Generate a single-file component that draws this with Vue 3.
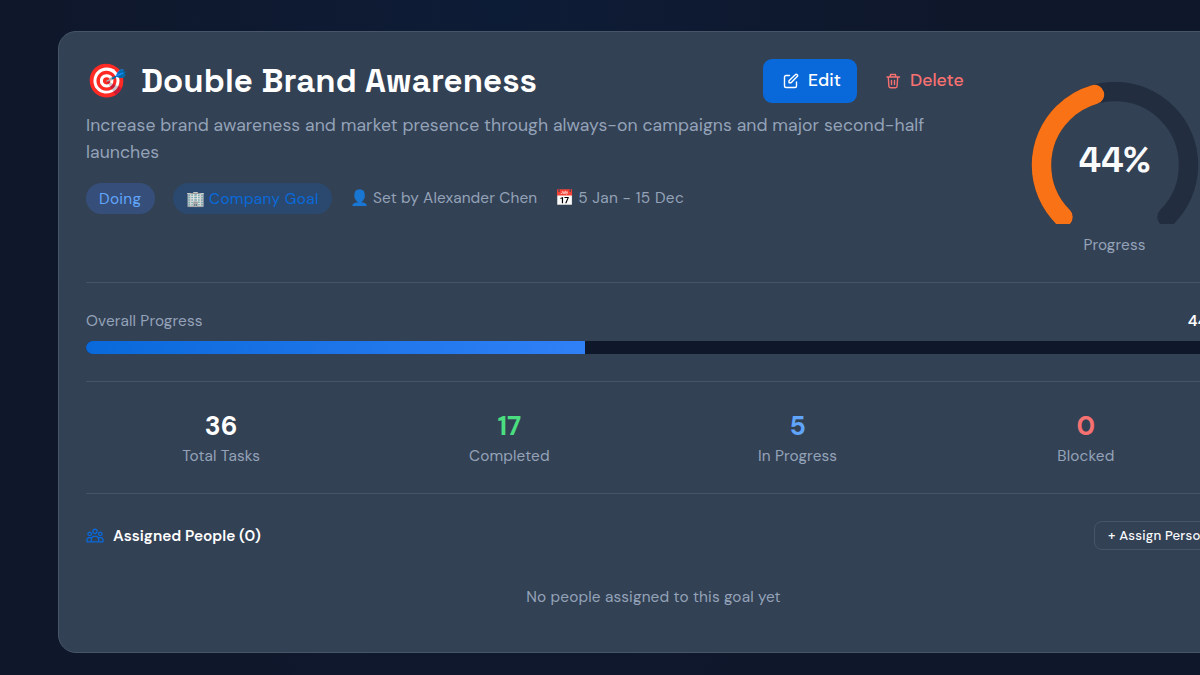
<script setup>
import { computed, ref } from 'vue'

const goal = ref({
  title: 'Double Brand Awareness',
  description:
    'Increase brand awareness and market presence through always-on campaigns and major second-half launches',
  status: 'Doing',
  owner: 'Alexander Chen',
  period: '5 Jan - 15 Dec',
  progress: 44
})

const stats = [
  { label: 'Total Tasks', value: 36, tone: 'total' },
  { label: 'Completed', value: 17, tone: 'done' },
  { label: 'In Progress', value: 5, tone: 'doing' },
  { label: 'Blocked', value: 0, tone: 'blocked' }
]

const people = ref([])

// 270 degree gauge, starting bottom left
const gaugeFill = computed(() => `${goal.value.progress} 100`)
</script>

<template>
  <div class="page">
    <section class="goal-card">
      <header class="goal-header">
        <div class="goal-main">
          <div class="title-row">
            <h1><span class="target">🎯</span><span>{{ goal.title }}</span></h1>
            <div class="actions">
              <button class="btn edit">
                <svg viewBox="0 0 16 16">
                  <path d="M6.5 2.5H3A1.5 1.5 0 0 0 1.5 4v9A1.5 1.5 0 0 0 3 14.5h9a1.5 1.5 0 0 0 1.5-1.5V9" />
                  <path d="M12.3 1.7a1.3 1.3 0 0 1 1.9 1.9L8.1 9.8H6V7.7z" />
                </svg>
                <span>Edit</span>
              </button>
              <button class="btn delete">
                <svg viewBox="0 0 16 16">
                  <path d="M2 4h12.5M3.300 4l.6 9.300a1.500 1.500 0 0 0 1.500 1.400h5.200a1.500 1.500 0 0 0 1.500-1.400L12.700 4M5 4l.6-2.500h4.800L11 4M6.500 7.500v4M9.500 7.500v4" />
                </svg>
                <span>Delete</span>
              </button>
            </div>
          </div>
          <p class="description">{{ goal.description }}</p>
          <div class="meta">
            <span class="chip status">{{ goal.status }}</span>
            <span class="chip company"><i>🏢</i><span>Company Goal</span></span>
            <span class="info"><i>👤</i><span>Set by {{ goal.owner }}</span></span>
            <span class="info"><i>📅</i><span class="period">{{ goal.period }}</span></span>
          </div>
        </div>
        <div class="gauge">
          <div class="gauge-chart">
            <svg viewBox="0 0 168 142">
              <path class="track" d="M32 135A73.5 73.5 0 1 1 136 135" />
              <path
                class="fill"
                d="M32 135A73.5 73.5 0 1 1 136 135"
                pathLength="100"
                :stroke-dasharray="gaugeFill"
              />
            </svg>
            <strong>{{ goal.progress }}%</strong>
          </div>
          <span class="gauge-label">Progress</span>
        </div>
      </header>

      <div class="overall">
        <div class="overall-head">
          <span>Overall Progress</span>
          <b>{{ goal.progress }}%</b>
        </div>
        <div class="bar">
          <div class="bar-fill" :style="{ width: goal.progress + '%' }"></div>
        </div>
      </div>

      <div class="stats">
        <div v-for="s in stats" :key="s.label" class="stat">
          <strong :class="s.tone">{{ s.value }}</strong>
          <span>{{ s.label }}</span>
        </div>
      </div>

      <div class="people">
        <div class="people-head">
          <svg viewBox="0 0 18 15">
            <path d="M9 1.200l2 1v2.300l-2 1.300-2-1.300V2.200zM3.700 4.200l1.700.8v1.700l-1.700 1L2 6.700V5zM14.300 4.200L16 5v1.700l-1.700 1-1.700-1V5z" />
            <path d="M5.300 13.800v-3.300L7 8.300h4l1.700 2.200v3.300zM5.300 13.800H1v-2.500l1.500-1.600h2.800M12.700 13.800H17v-2.500l-1.500-1.600h-2.800" />
          </svg>
          <h2>Assigned People ({{ people.length }})</h2>
          <button class="assign">+ Assign Person</button>
        </div>
        <p class="empty">No people assigned to this goal yet</p>
      </div>
    </section>
  </div>
</template>

<style>
body {
  overflow: hidden;
  background: #0f172a;
}
</style>

<style scoped>
* {
  box-sizing: border-box;
}
.page {
  overflow: hidden;
  height: 675px;
  padding: 31px 0 0 58px;
  font-family: 'DM Sans', Inter, sans-serif;
  font-optical-sizing: none;
  color: #94a3b8;
  background: radial-gradient(ellipse 480px 850px at 500px 0, #0d1c36, #0f172a);
}
.goal-card {
  width: 1191px;
  height: 622px;
  padding: 27px;
  border: 1px solid #475569;
  border-radius: 18px;
  background: #334155;
}
.goal-header {
  display: flex;
  justify-content: space-between;
  height: 224px;
  border-bottom: 1px solid #475569;
}
.goal-main {
  width: 896px;
}
.title-row {
  display: flex;
  justify-content: space-between;
  align-items: center;
  height: 44px;
}
h1 {
  display: flex;
  align-items: center;
  gap: 13px;
  margin: 0;
  color: #fff;
  font-family: 'Space Grotesk', 'DM Sans', Inter, sans-serif;
  font-size: 33px;
  line-height: 44px;
  font-weight: 700;
  letter-spacing: 0.09px;
  white-space: nowrap;
}
.target {
  width: 42px;
}
.actions {
  display: flex;
  gap: 11px;
}
.btn {
  display: flex;
  align-items: center;
  gap: 9px;
  height: 44px;
  padding: 0 18px 2px;
  border: 0;
  border-radius: 9px;
  background: transparent;
  font-family: inherit;
  font-size: 17.6px;
  font-weight: 500;
}
.btn svg {
  flex: none;
  width: 16px;
  height: 16px;
  margin-top: 1px;
  fill: none;
  stroke: currentColor;
  stroke-width: 1.4;
  stroke-linejoin: round;
  stroke-linecap: round;
}
.edit {
  width: 94px;
  padding-left: 20px;
  padding-right: 16px;
  background: #0969da;
  color: #fff;
}
.delete {
  width: 114px;
  padding-left: 17px;
  color: #f87171;
}
.description {
  margin: 9px 0 0;
  max-width: 860px;
  font-size: 17.6px;
  line-height: 26.5px;
  letter-spacing: 0.075px;
}
.meta {
  display: flex;
  align-items: center;
  gap: 18px;
  margin-top: 17px;
  font-size: 15.4px;
  line-height: 32px;
  letter-spacing: 0.12px;
  white-space: nowrap;
}
.meta i {
  display: inline-block;
  width: 23px;
  font-style: normal;
}
.chip {
  height: 31px;
  padding: 0 13px;
  border-radius: 16px;
}
.status {
  width: 69px;
  background: #364f7a;
  color: #60a5fa;
  letter-spacing: 0.3px;
}
.company {
  width: 159px;
  background: #2b496f;
  color: #0969da;
  letter-spacing: 0.34px;
}
.period {
  letter-spacing: 0.32px;
}
.gauge {
  display: flex;
  flex-direction: column;
  align-items: center;
  width: 213px;
  padding-top: 23px;
}
.gauge-chart {
  display: grid;
  height: 143px;
}
.gauge-chart > * {
  grid-area: 1 / 1;
}
.gauge svg {
  width: 168px;
  height: 142px;
  fill: none;
  stroke-width: 19.5;
  stroke-linecap: round;
}
.track {
  stroke: #222d40;
}
.fill {
  stroke: #f97316;
}
.gauge strong {
  align-self: center;
  justify-self: center;
  margin-top: 11px;
  color: #f8fafc;
  font-family: 'Space Grotesk', 'DM Sans', Inter, sans-serif;
  font-size: 35.2px;
}
.gauge-label {
  margin-top: 10px;
  font-size: 15.4px;
  line-height: 20px;
  letter-spacing: 0.1px;
}
.overall {
  height: 99px;
  padding-top: 26px;
  border-bottom: 1px solid #475569;
}
.overall-head {
  display: flex;
  justify-content: space-between;
  height: 32px;
  font-size: 15.4px;
  line-height: 25px;
  letter-spacing: 0.12px;
}
.overall-head b {
  color: #fff;
  font-weight: 600;
  letter-spacing: 0.2px;
}
.bar {
  overflow: hidden;
  height: 13px;
  border-radius: 7px;
  background: #0f172a;
}
.bar-fill {
  height: 100%;
  background: linear-gradient(90deg, #0969da, #3080f7);
}
.stats {
  display: grid;
  grid-template-columns: repeat(4, 1fr);
  gap: 18px;
  height: 112px;
  padding-top: 26px;
  border-bottom: 1px solid #475569;
}
.stat {
  display: flex;
  flex-direction: column;
  align-items: center;
}
.stat strong {
  font-size: 26.4px;
  line-height: 36px;
}
.stat span {
  margin-top: 1px;
  font-size: 15.4px;
  line-height: 22px;
  letter-spacing: 0.12px;
}
.total {
  color: #fff;
}
.done {
  color: #4ade80;
}
.doing {
  color: #60a5fa;
}
.blocked {
  color: #f87171;
}
.people {
  padding-top: 27px;
}
.people-head {
  display: flex;
  align-items: center;
  height: 29px;
}
.people-head svg {
  width: 18px;
  height: 15px;
  fill: none;
  stroke: #0969da;
  stroke-width: 1.3;
  stroke-linejoin: round;
}
h2 {
  flex: 1;
  margin: 0 0 0 9px;
  color: #fff;
  font-size: 15.4px;
  font-weight: 600;
}
.assign {
  width: 127px;
  height: 29px;
  padding: 0 0 0 13px;
  border: 1px solid #475569;
  border-radius: 8px;
  background: transparent;
  color: #f8fafc;
  font-family: inherit;
  font-size: 13.2px;
  font-weight: 500;
  letter-spacing: 0.2px;
  text-align: left;
  white-space: nowrap;
}
.empty {
  margin: 35px 0 0;
  font-size: 15.4px;
  line-height: 24px;
  letter-spacing: 0.13px;
  text-align: center;
}
</style>
